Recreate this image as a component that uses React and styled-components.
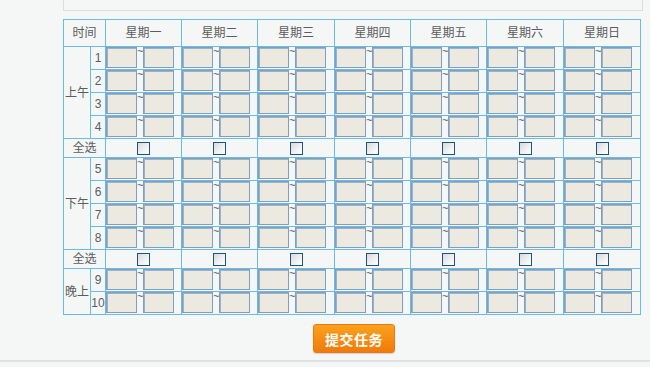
import React from "react";
import styled, { createGlobalStyle } from "styled-components";

const GlobalStyle = createGlobalStyle`
  html, body {
    margin: 0;
    padding: 0;
    background: #f5f7f7;
  }
  body {
    font-family: "Liberation Sans", "Noto Sans CJK SC", sans-serif;
    font-size: 12px;
    color: #5c5c5c;
  }
`;

const days = ["星期一", "星期二", "星期三", "星期四", "星期五", "星期六", "星期日"];
const dayWidths = [76, 76, 77, 76, 76, 77, 77];

const Page = styled.div`
  width: 650px;
  height: 367px;
  overflow: hidden;
  display: flex;
  flex-direction: column;
`;

const Main = styled.div`
  padding-left: 63px;
  width: 580px;
  height: 362px;
  display: flex;
  flex-direction: column;
  align-items: flex-start;
`;

const TopPanel = styled.div`
  width: 580px;
  height: 11px;
  border: 1px solid #dcdede;
  border-top: none;
  box-sizing: border-box;
`;

const Footer = styled.div`
  border-top: 2px solid #e0e2e2;
  height: 5px;
`;

const Grid = styled.table`
  margin-top: 8px;
  border-collapse: collapse;
  table-layout: fixed;
  width: 578px;
`;

const Cell = styled.td`
  border: 1px solid #69bce6;
  padding: 0;
  height: ${(p) => p.$h}px;
  text-align: ${(p) => p.$align || "center"};
  vertical-align: ${(p) => p.$valign || "middle"};
  line-height: 14px;
  color: #5c5c5c;
  white-space: nowrap;
  overflow: hidden;
`;

const Slot = styled.div`
  display: flex;
  align-items: flex-start;
  height: 22px;
`;

const TimeInput = styled.input`
  width: 31px;
  height: 21px;
  box-sizing: border-box;
  margin: 0;
  padding: 0;
  border: 1px solid #7f9fc2;
  box-shadow: inset 1px 1px 0 #9eb2c6;
  background: #ece9e1;
  outline: none;
`;

const Tilde = styled.span`
  width: 6px;
  font-size: 11px;
  line-height: 9px;
  color: #555;
  text-align: center;
`;

const Check = styled.input.attrs({ type: "checkbox" })`
  appearance: none;
  width: 13px;
  height: 13px;
  display: block;
  margin: 0 auto;
  border: 1px solid #1d5380;
  box-sizing: border-box;
  background: linear-gradient(135deg, #d9d9d9 0%, #f2f2f2 60%, #ffffff 100%);
`;

const ButtonRow = styled.div`
  width: 578px;
  display: flex;
  justify-content: center;
  margin-top: 9px;
  padding-left: 2px;
`;

const Submit = styled.button`
  width: 82px;
  height: 29px;
  border: 1px solid #ea7a10;
  border-radius: 3px;
  background: linear-gradient(#fba21c, #f07a0a);
  color: #fff;
  font-family: "Noto Sans CJK SC", sans-serif;
  font-weight: bold;
  font-size: 14px;
  letter-spacing: 0.5px;
  padding: 0;
  box-shadow: 0 1px 1px rgba(0, 0, 0, 0.15);
`;

function SlotRow({ num, group, span }) {
  return (
    <tr>
      {group && (
        <Cell $h={22} rowSpan={span}>
          {group}
        </Cell>
      )}
      <Cell $h={22}>{num}</Cell>
      {days.map((d) => (
        <Cell key={d} $h={22} $align="left" $valign="top">
          <Slot>
            <TimeInput />
            <Tilde>~</Tilde>
            <TimeInput />
          </Slot>
        </Cell>
      ))}
    </tr>
  );
}

function SelectAllRow() {
  return (
    <tr>
      <Cell $h={18} colSpan={2}>全选</Cell>
      {days.map((d) => (
        <Cell key={d} $h={18}>
          <Check />
        </Cell>
      ))}
    </tr>
  );
}

export default function App() {
  return (
    <Page>
      <GlobalStyle />
      <Main>
        <TopPanel />
        <Grid>
          <colgroup>
            <col style={{ width: 27 }} />
            <col style={{ width: 15 }} />
            {dayWidths.map((w, i) => (
              <col key={i} style={{ width: w }} />
            ))}
          </colgroup>
          <tbody>
            <tr>
              <Cell $h={26} colSpan={2}>时间</Cell>
              {days.map((d) => (
                <Cell key={d} $h={26}>{d}</Cell>
              ))}
            </tr>
            <SlotRow num={1} group="上午" span={4} />
            <SlotRow num={2} />
            <SlotRow num={3} />
            <SlotRow num={4} />
            <SelectAllRow />
            <SlotRow num={5} group="下午" span={4} />
            <SlotRow num={6} />
            <SlotRow num={7} />
            <SlotRow num={8} />
            <SelectAllRow />
            <SlotRow num={9} group="晚上" span={2} />
            <SlotRow num={10} />
          </tbody>
        </Grid>
        <ButtonRow>
          <Submit>提交任务</Submit>
        </ButtonRow>
      </Main>
      <Footer />
    </Page>
  );
}
